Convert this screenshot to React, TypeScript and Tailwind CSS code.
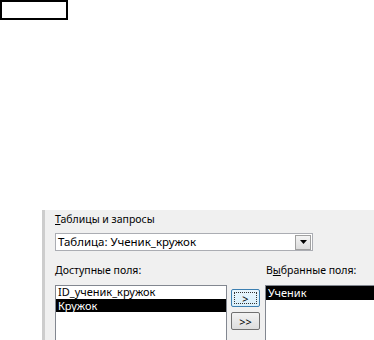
export default function App() {
  return (
    <div className="w-[374px] h-[340px] overflow-hidden bg-white text-[11px] text-black font-['Noto_Sans',sans-serif]">
      {/* empty frame at the top */}
      <div className="w-[68px] h-[20px] border-2 border-black" />

      {/* wizard panel */}
      <div className="mt-[190px] ml-[42px] h-[130px] border-l-[3px] border-[#cdcdcd] bg-[#f0f0f0] pl-[10px] pt-[1px]">
        <div className="h-[16px] text-[10.5px] leading-[16px]">
          <span className="underline">Т</span>аблицы и запросы
        </div>

        {/* combobox */}
        <div className="mt-[6px] flex h-[18px] w-[258px] items-center border border-[#abadb3] bg-white pl-[2px] pr-[1px]">
          <span className="flex-1 text-[11.5px] leading-[16px]">Таблица: Ученик_кружок</span>
          <span className="flex h-[15px] w-[16px] items-center justify-center border border-[#a0a0a0] bg-gradient-to-b from-[#f4f4f4] to-[#dcdcdc]">
            <svg width="7" height="4" viewBox="0 0 7 4">
              <path d="M0 0h7L3.5 4z" fill="#000" />
            </svg>
          </span>
        </div>

        <div className="mt-[11px] grid grid-cols-[172px_38px_1fr]">
          <div className="h-[16px] text-[10.5px] leading-[16px]">
            <span className="underline">Д</span>оступные поля:
          </div>
          <div />
          <div className="h-[16px] pl-[1px] text-[10.5px] leading-[16px]">
            В<span className="underline">ы</span>бранные поля:
          </div>

          {/* available fields */}
          <div className="mt-[7px] h-[60px] border border-[#828790] bg-white">
            <div className="h-[13px] pl-[2px] leading-[12px]">ID_ученик_кружок</div>
            <div className="h-[13px] bg-black pl-[2px] leading-[13px] text-white">Кружок</div>
          </div>

          {/* move buttons */}
          <div className="mt-[11px] flex flex-col gap-[5px] pl-[4px]">
            <button className="flex h-[18px] w-[29px] items-center justify-center rounded-[2px] border border-[#3c7fb1] bg-gradient-to-b from-[#eaf6fd] to-[#d9f0fc] p-[2px]">
              <span className="flex h-full w-full items-center justify-center border border-dotted border-[#333] leading-none">&gt;</span>
            </button>
            <button className="flex h-[18px] w-[29px] items-center justify-center rounded-[2px] border border-[#707070] bg-gradient-to-b from-[#f2f2f2] to-[#dddddd] leading-none">
              &gt;&gt;
            </button>
          </div>

          {/* selected fields */}
          <div className="mt-[7px] h-[60px] border border-r-0 border-[#828790] bg-white">
            <div className="h-[14px] bg-black pl-[2px] leading-[14px] text-white">Ученик</div>
          </div>
        </div>
      </div>
    </div>
  );
}
